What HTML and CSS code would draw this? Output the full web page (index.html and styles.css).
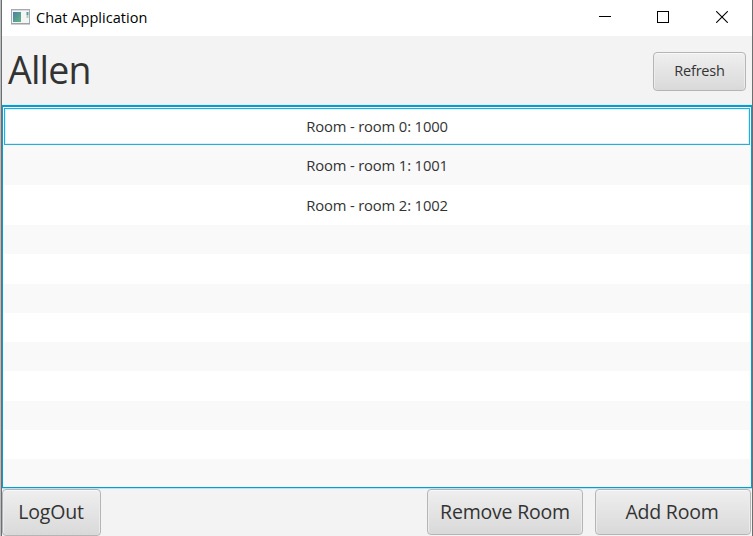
FILE: index.html
```html
<!DOCTYPE html>
<html lang="en">
<head>
<meta charset="utf-8">
<title>Chat Application</title>
<link rel="stylesheet" href="styles.css">
</head>
<body>
<div class="window">
  <header class="titlebar">
    <svg class="app-icon" width="20" height="16" viewBox="0 0 20 16">
      <defs><linearGradient id="g" x1="0" y1="0" x2="1" y2="1"><stop offset="0" stop-color="#4c80a6"/><stop offset="1" stop-color="#61b681"/></linearGradient></defs>
      <rect x=".5" y=".5" width="18" height="14" fill="#f5f5f6" stroke="#a6aab0"/>
      <path d="M1 1.5h17" stroke="#d9dce2"/>
      <path d="M0 15h19" stroke="#999da3"/>
      <rect x="2" y="3" width="8" height="10" fill="url(#g)"/>
      <path d="M16.5 3v3" stroke="#5b9a9d" stroke-width="2"/>
      <path d="M16.5 6v3" stroke="#a8d3b4" stroke-width="2"/>
    </svg>
    <span class="title">Chat Application</span>
    <div class="controls">
      <svg width="12" height="12" viewBox="0 0 12 12"><path d="M0 5.5h12" stroke="#000"/></svg>
      <svg width="12" height="12" viewBox="0 0 12 12"><rect x=".5" y=".5" width="11" height="11" fill="none" stroke="#000"/></svg>
      <svg class="close" width="12" height="12" viewBox="0 0 12 12"><path d="M.2 .2l11.6 11.6M11.8 .2L.2 11.8" stroke="#000" stroke-width="1.1"/></svg>
    </div>
  </header>
  <div class="top">
    <h1>Allen</h1>
    <button class="btn refresh">Refresh</button>
  </div>
  <ul class="list">
    <li class="room focused">Room - room 0: 1000</li>
    <li class="room">Room - room 1: 1001</li>
    <li class="room">Room - room 2: 1002</li>
    <li></li><li></li><li></li><li></li><li></li><li></li><li></li><li></li><li></li>
  </ul>
  <footer class="bottom">
    <button class="btn logout">LogOut</button>
    <button class="btn remove">Remove Room</button>
    <button class="btn add">Add Room</button>
  </footer>
</div>
</body>
</html>
```

FILE: styles.css
```css
* { box-sizing: border-box; }
body {
  margin: 0;
  height: 536px;
  overflow: hidden;
  padding-left: 1px;
  background: #b9bcc0;
  font-family: "Open Sans", "Noto Sans", sans-serif;
  color: #333;
}
.window {
  width: 752px;
  height: 536px;
  display: flex;
  flex-direction: column;
  border: solid #6e6e6e;
  border-width: 0 1px;
  background: #f3f3f3;
}
.titlebar {
  height: 36px;
  flex: none;
  display: flex;
  align-items: center;
  padding: 0 24px 0 9px;
  background: #fff;
  color: #000;
}
.app-icon { margin-bottom: 3px; }
.title { margin: 0 0 2px 5px; font-size: 14.5px; letter-spacing: 0.05px; white-space: nowrap; }
.controls { margin-left: auto; display: flex; gap: 46px; margin-bottom: 2px; }
.controls svg { display: block; }
.controls .close { margin-left: 1px; }
.top {
  height: 69px;
  flex: none;
  display: flex;
  align-items: center;
  justify-content: space-between;
  padding: 0 6px 1px 6px;
}
h1 { margin: 0 0 1px; font-size: 37.5px; line-height: 50px; font-weight: 400; letter-spacing: -0.8px; }
.btn {
  flex: none;
  padding: 0 0 2px;
  border: 1px solid #b5b5b5;
  border-radius: 4px;
  background: linear-gradient(#efefef, #d9d9d9);
  box-shadow: inset 0 1px #f8f8f8, inset 1px 0 #ececec, inset -1px 0 #ececec;
  color: #333;
  font-family: inherit;
  font-size: 19.5px;
  letter-spacing: -0.2px;
  white-space: nowrap;
}
.refresh { width: 93px; height: 39px; margin-top: 2px; font-size: 14.5px; letter-spacing: -0.2px; }
.list {
  height: 383px;
  flex: none;
  margin: 0;
  padding: 0;
  list-style: none;
  display: flex;
  flex-direction: column;
  overflow: hidden;
  border: 1px solid #039ed3;
  border-top-width: 2px;
  box-shadow: 0 -1px #e0f0f5;
  background: #fff;
}
.list li { flex: 0 0 29.25px; }
.list li:nth-child(even) { background: #f9f9f9; }
.list .room {
  flex: 0 0 40px;
  display: flex;
  align-items: center;
  justify-content: center;
  font-size: 14.8px;
  letter-spacing: -0.15px;
}
.list .focused {
  flex-basis: 37px;
  margin: 1px 1px 0;
  padding-bottom: 2px;
  border: 1px solid #29acd6;
  box-shadow: inset 0 0 0 1px #d8f0f8;
}
.bottom {
  flex: 1;
  display: flex;
  align-items: flex-start;
  padding-right: 1px;
  border-top: 1px solid #b8e3f0;
}
.logout { width: 99px; height: 47px; padding-right: 1px; }
.remove { width: 156px; height: 46px; margin-left: auto; }
.add { width: 156px; height: 46px; margin-left: 12px; padding-right: 2px; }
```
